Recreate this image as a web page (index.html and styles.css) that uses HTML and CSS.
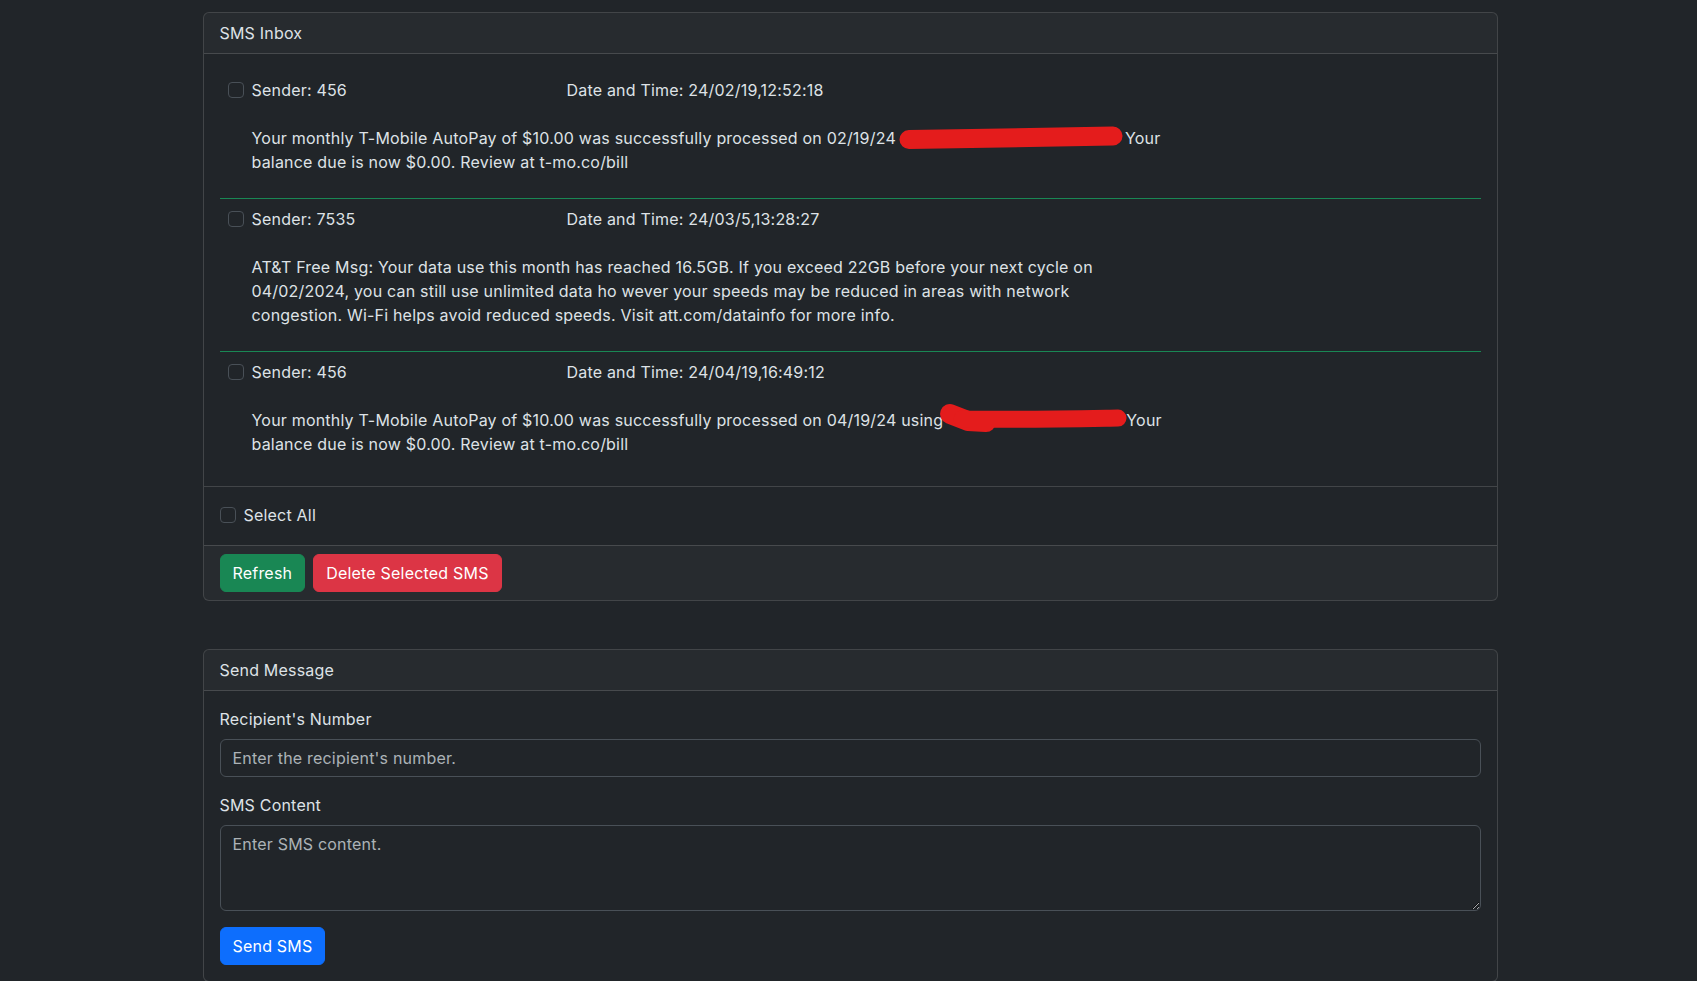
FILE: index.html
```html
<!DOCTYPE html>
<html lang="en">
<head>
<meta charset="utf-8">
<title>SMS</title>
<link rel="stylesheet" href="styles.css">
</head>
<body>
<main class="container">
  <section class="card">
    <div class="card-header">SMS Inbox</div>
    <ul class="sms-list">
      <li class="sms-item">
        <div class="sms-head">
          <input type="checkbox" class="check">
          <span class="sender">Sender: 456</span>
          <span class="date">Date and Time: 24/02/19,12:52:18</span>
        </div>
        <p class="sms-text">Your monthly T-Mobile AutoPay of $10.00 was successfully processed on 02/19/24<span class="redact redact-a"><svg width="224" height="24" viewBox="0 0 224 24"><path d="M10 13.5 C 60 13, 120 11, 214 10" fill="none" stroke="#e41c1c" stroke-width="19" stroke-linecap="round"/></svg></span>Your<br>balance due is now $0.00. Review at t-mo.co/bill</p>
      </li>
      <li class="sms-item">
        <div class="sms-head">
          <input type="checkbox" class="check">
          <span class="sender">Sender: 7535</span>
          <span class="date">Date and Time: 24/03/5,13:28:27</span>
        </div>
        <p class="sms-text">AT&amp;T Free Msg: Your data use this month has reached 16.5GB. If you exceed 22GB before your next cycle on<br>04/02/2024, you can still use unlimited data ho wever your speeds may be reduced in areas with network<br>congestion. Wi-Fi helps avoid reduced speeds. Visit att.com/datainfo for more info.</p>
      </li>
      <li class="sms-item">
        <div class="sms-head">
          <input type="checkbox" class="check">
          <span class="sender">Sender: 456</span>
          <span class="date">Date and Time: 24/04/19,16:49:12</span>
        </div>
        <p class="sms-text">Your monthly T-Mobile AutoPay of $10.00 was successfully processed on 04/19/24 using<span class="redact redact-b"><svg width="188" height="24" viewBox="0 0 188 24"><path d="M10 6 L 28 13 L 46 14" fill="none" stroke="#e41c1c" stroke-width="20" stroke-linecap="round" stroke-linejoin="round"/><path d="M22 11 C 70 12, 120 11, 178 10" fill="none" stroke="#e41c1c" stroke-width="17" stroke-linecap="round"/></svg></span>Your<br>balance due is now $0.00. Review at t-mo.co/bill</p>
      </li>
    </ul>
    <div class="select-all">
      <label class="form-check"><input type="checkbox" class="check"> Select All</label>
    </div>
    <div class="card-footer">
      <button class="btn btn-success" type="button">Refresh</button>
      <button class="btn btn-danger" type="button">Delete Selected SMS</button>
    </div>
  </section>

  <section class="card send-card">
    <div class="card-header">Send Message</div>
    <form class="card-body">
      <div class="field">
        <label class="form-label" for="num">Recipient's Number</label>
        <input id="num" class="form-control" type="text" placeholder="Enter the recipient's number.">
      </div>
      <div class="field">
        <label class="form-label" for="content">SMS Content</label>
        <textarea id="content" class="form-control textarea" rows="3" placeholder="Enter SMS content."></textarea>
      </div>
      <button class="btn btn-primary" type="button">Send SMS</button>
    </form>
  </section>
</main>
</body>
</html>
```

FILE: styles.css
```css
*, *::before, *::after { box-sizing: border-box; }
html { scrollbar-width: none; }
body {
  margin: 0;
  background: #212529;
  color: #dee2e6;
  font-family: Inter, "Open Sans", sans-serif;
  font-size: 16px;
  line-height: 24px;
  letter-spacing: 0.2px;
}
.container {
  max-width: 1320px;
  margin: 0 auto;
  padding: 12px 11px 0 14px;
}
.card {
  border: 1px solid rgba(255, 255, 255, 0.15);
  border-radius: 6px;
  background: #212529;
}
.card-header {
  padding: 8px 16px;
  background: rgba(255, 255, 255, 0.03);
  border-bottom: 1px solid rgba(255, 255, 255, 0.15);
  border-radius: 5px 5px 0 0;
}
.sms-list {
  list-style: none;
  margin: 0;
  padding: 16px 16px 6px;
}
.sms-item {
  padding: 8px 8px;
  border-bottom: 1px solid #198754;
}
.sms-item:last-child { border-bottom: 0; }
.sms-head {
  display: flex;
  align-items: center;
  height: 24px;
  margin-bottom: 24px;
}
.check {
  appearance: none;
  -webkit-appearance: none;
  flex: none;
  width: 16px;
  height: 16px;
  margin: 0 8px 0 0;
  border: 1px solid #495057;
  border-radius: 4px;
  background: #212529;
}
.sender { width: 315px; flex: none; }
.sms-text {
  margin: 0 0 16px 24px;
  max-width: 980px;
}
.redact {
  display: inline-block;
  vertical-align: top;
  height: 24px;
}
.redact svg { display: block; overflow: visible; }
.redact-a { width: 224px; margin: 0 2px 0 3px; }
.redact-b { width: 188px; margin: 0 -2px 0 -3px; }
.select-all {
  border-top: 1px solid rgba(255, 255, 255, 0.15);
  padding: 16px;
}
.form-check {
  display: flex;
  align-items: center;
  margin-bottom: 2px;
}
.card-footer {
  display: flex;
  gap: 8px;
  padding: 8px 16px;
  background: rgba(255, 255, 255, 0.03);
  border-top: 1px solid rgba(255, 255, 255, 0.15);
  border-radius: 0 0 5px 5px;
}
.btn {
  font: inherit;
  letter-spacing: inherit;
  line-height: 24px;
  padding: 6px 12px;
  border: 1px solid transparent;
  border-radius: 6px;
  color: #fff;
  cursor: pointer;
}
.btn-success { background: #198754; border-color: #198754; }
.btn-danger { background: #dc3545; border-color: #dc3545; }
.btn-primary { background: #0d6efd; border-color: #0d6efd; }
.send-card { margin-top: 48px; }
.card-body { padding: 16px; }
.field { margin-bottom: 16px; }
.form-label { display: block; margin-bottom: 8px; }
.form-control {
  display: block;
  width: 100%;
  font: inherit;
  letter-spacing: inherit;
  line-height: 24px;
  color: #dee2e6;
  background: #212529;
  border: 1px solid #495057;
  border-radius: 6px;
  padding: 6px 12px;
}
.form-control::placeholder { color: rgba(222, 226, 230, 0.75); }
.textarea { height: 86px; resize: vertical; }
```
